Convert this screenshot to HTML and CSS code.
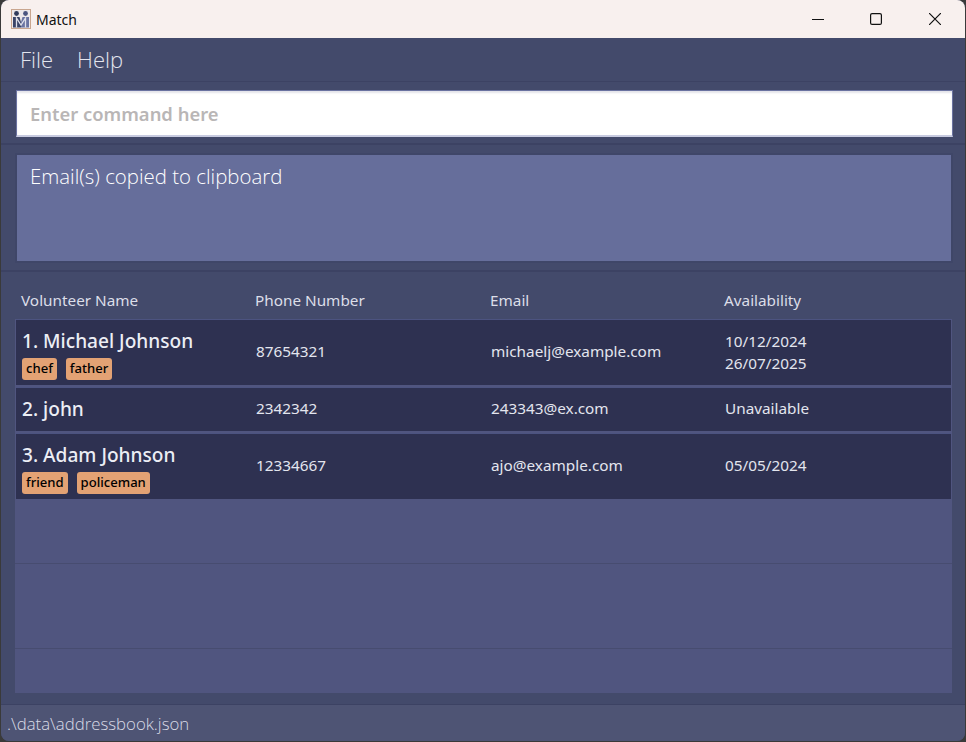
FILE: index.html
```html
<!DOCTYPE html>
<html lang="en">
<head>
    <meta charset="UTF-8">
    <meta name="viewport" content="width=device-width, initial-scale=1.0">
    <title>Match</title>
    <link rel="stylesheet" href="styles.css">
</head>
<body>
    <div class="window">
        <div class="titlebar">
            <svg class="app-icon" width="20" height="20" viewBox="0 0 20 20">
                <rect x="0.5" y="0.5" width="19" height="19" fill="#ece8ea" stroke="#c9a68f"/>
                <circle cx="5.5" cy="4.5" r="2.4" fill="#2f3a5c"/>
                <circle cx="14.5" cy="4.5" r="2.4" fill="#4a5580"/>
                <path d="M2 8h6.5l1.500 5v5.500H2z" fill="#3a4468"/>
                <path d="M18 8h-6.500l-1.500 5v5.500h8z" fill="#6a74a2"/>
                <path d="M5.500 18.500V9l4.500 7 4.500-7v9.500" fill="none" stroke="#dfe0ea" stroke-width="1.300"/>
            </svg>
            <span class="app-title">Match</span>
            <div class="win-buttons">
                <svg class="win-min" width="12" height="12" viewBox="0 0 12 12"><path d="M0 6.500h12" stroke="#111" stroke-width="1.200" fill="none"/></svg>
                <svg width="12" height="12" viewBox="0 0 12 12"><rect x="0.600" y="0.600" width="10.800" height="10.800" rx="1.500" stroke="#111" stroke-width="1.200" fill="none"/></svg>
                <svg width="12" height="12" viewBox="0 0 12 12"><path d="M0 0l12 12M12 0L0 12" stroke="#111" stroke-width="1.200" fill="none"/></svg>
            </div>
        </div>

        <div class="menubar">
            <span>File</span>
            <span>Help</span>
        </div>

        <div class="command-box">
            <input class="command-input" type="text" placeholder="Enter command here">
        </div>

        <div class="result-box">
            <div class="result-text">Email(s) copied to clipboard</div>
        </div>

        <div class="list-section">
            <div class="list-head">
                <span>Volunteer Name</span>
                <span>Phone Number</span>
                <span>Email</span>
                <span>Availability</span>
            </div>
            <div class="list">
                <div class="person">
                    <div class="who tagged">
                        <div class="name">1. Michael Johnson</div>
                        <div class="tags"><span class="tag">chef</span><span class="tag">father</span></div>
                    </div>
                    <div>87654321</div>
                    <div>michaelj@example.com</div>
                    <div class="dates two"><div>10/12/2024</div><div>26/07/2025</div></div>
                </div>
                <div class="person">
                    <div class="who"><div class="name">2. john</div></div>
                    <div>2342342</div>
                    <div>243343@ex.com</div>
                    <div class="dates"><div>Unavailable</div></div>
                </div>
                <div class="person">
                    <div class="who tagged">
                        <div class="name">3. Adam Johnson</div>
                        <div class="tags"><span class="tag">friend</span><span class="tag">policeman</span></div>
                    </div>
                    <div>12334667</div>
                    <div>ajo@example.com</div>
                    <div class="dates"><div>05/05/2024</div></div>
                </div>
                <div class="empty-row first"></div>
                <div class="empty-row second"></div>
                <div class="empty-row last"></div>
            </div>
        </div>

        <div class="statusbar">.\data\addressbook.json</div>
    </div>
</body>
</html>
```

FILE: styles.css
```css
html, body { margin: 0; padding: 0; height: 100%; background: #3a3a3a; overflow: hidden; }
body { font-family: "Noto Sans", "Open Sans", Arial, sans-serif; }
.window { width: 964px; height: 741px; margin-left: 1px; border-radius: 8px; overflow: hidden; display: flex; flex-direction: column; background: #434a6b; }

.titlebar { height: 38px; flex: none; background: #f8f0ee; display: flex; align-items: center; padding-left: 10px; color: #111; font-size: 14px; box-sizing: border-box; }
.app-icon { margin-right: 5px; }
.win-buttons { margin-left: auto; display: flex; gap: 47px; padding-right: 24px; }
.win-min { margin-right: -1px; }

.menubar { height: 44px; flex: none; display: flex; gap: 24px; align-items: center; padding: 0 0 2px 19px; color: #e3e5ee; font-size: 22px; font-weight: 300; font-family: "Open Sans", sans-serif; box-sizing: border-box; border-bottom: 1px solid #3c4263; }

.command-box { height: 63px; flex: none; box-sizing: border-box; padding: 8px 12px 0 15px; border-bottom: 2px solid #3c4263; }
.command-input { display: block; width: 100%; height: 47px; box-sizing: border-box; border: 1px solid #6a72a0; border-bottom: 2px solid #c8cbe0; background: #fff; box-shadow: inset 0 2px 2px #e4e4ea; padding: 0 0 0 13px; font-family: inherit; font-size: 18.4px; font-weight: 600; outline: none; }
.command-input::placeholder { color: #b9b6b6; opacity: 1; }

.result-box { height: 127px; flex: none; box-sizing: border-box; padding: 8px 12px 7px 14px; border-bottom: 2px solid #3c4263; }
.result-text { height: 100%; box-sizing: border-box; background: #666e9b; border: 2px solid #3f4668; padding: 6px 13px; color: #fff; font-size: 20.4px; font-weight: 300; font-family: "Open Sans", sans-serif; line-height: 30px; }

.list-section { flex: 1; display: flex; flex-direction: column; min-height: 0; padding: 0 13px 11px 14px; }
.list-head { height: 47px; flex: none; display: grid; grid-template-columns: 234px 235px 234px 1fr; align-items: end; padding: 0 0 9px 6px; box-sizing: border-box; color: #dcdee8; font-size: 15.3px; }
.list { flex: 1; background: #50557f; display: flex; flex-direction: column; }

.person { display: grid; grid-template-columns: 234px 235px 234px 1fr; align-items: center; box-sizing: border-box; background: #2e3151; color: #e3e5ee; font-size: 15.3px; margin: 0 1px 2px; padding: 0 0 4px 6px; border-top: 1px solid #4c5380; }
.person:nth-child(1) { height: 66px; }
.person:nth-child(2) { height: 44px; }
.person:nth-child(3) { height: 66px; margin-bottom: 0; }
.who { padding-top: 2px; }
.who.tagged { padding-top: 7px; }
.name { font-size: 19.1px; font-weight: 500; color: #eceef5; line-height: 26px; }
.tags { display: flex; gap: 9px; margin-top: 4px; }
.tag { background: #e3a274; color: #000; font-size: 13.1px; font-weight: 500; border-radius: 3px; padding: 0 4px; height: 22px; line-height: 21px; }
.dates { line-height: 22px; }
.dates.two { padding-top: 2px; }

.empty-row { border-bottom: 1px solid #474c70; box-sizing: border-box; }
.empty-row.first { height: 65px; }
.empty-row.second { height: 85px; }
.empty-row.last { flex: 1; border-bottom: none; }

.statusbar { height: 37px; flex: none; box-sizing: border-box; background: #4e5474; border-top: 1px solid #3c4263; padding: 7px 0 0 6px; color: #d9dbe6; font-size: 16.8px; font-weight: 300; font-family: "Open Sans", sans-serif; }
```
